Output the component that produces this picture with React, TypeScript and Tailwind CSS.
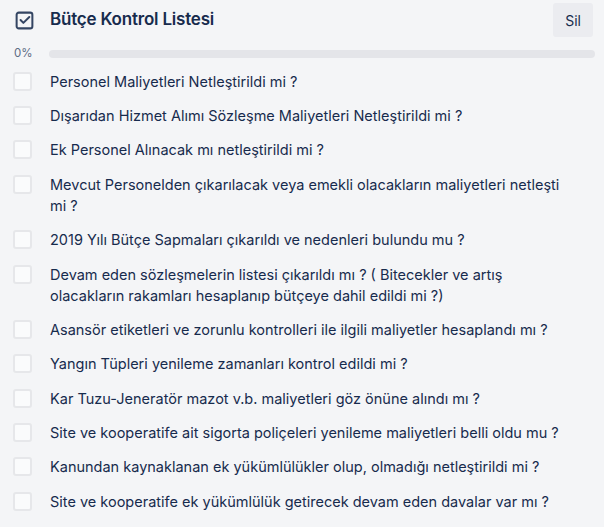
import { useState } from 'react';

const items = [
  'Personel Maliyetleri Netleştirildi mi ?',
  'Dışarıdan Hizmet Alımı Sözleşme Maliyetleri Netleştirildi mi ?',
  'Ek Personel Alınacak mı netleştirildi mi ?',
  'Mevcut Personelden çıkarılacak veya emekli olacakların maliyetleri netleşti mi ?',
  '2019 Yılı Bütçe Sapmaları çıkarıldı ve nedenleri bulundu mu ?',
  'Devam eden sözleşmelerin listesi çıkarıldı mı ? ( Bitecekler ve artış olacakların rakamları hesaplanıp bütçeye dahil edildi mi ?)',
  'Asansör etiketleri ve zorunlu kontrolleri ile ilgili maliyetler hesaplandı mı ?',
  'Yangın Tüpleri yenileme zamanları kontrol edildi mi ?',
  'Kar Tuzu-Jeneratör mazot v.b. maliyetleri göz önüne alındı mı ?',
  'Site ve kooperatife ait sigorta poliçeleri yenileme maliyetleri belli oldu mu ?',
  'Kanundan kaynaklanan ek yükümlülükler olup, olmadığı netleştirildi mi ?',
  'Site ve kooperatife ek yükümlülük getirecek devam eden davalar var mı ?',
];

function ChecklistIcon() {
  return (
    <svg width="21" height="21" viewBox="0 0 24 24" fill="none" stroke="#344563" strokeWidth={2.3} strokeLinecap="round" strokeLinejoin="round">
      <rect x="3" y="3" width="18" height="18" rx="2.5" />
      <path d="M7.5 11.5l3.2 3.2L17.5 8" />
    </svg>
  );
}

export default function App() {
  const [checked, setChecked] = useState<boolean[]>(items.map(() => false));
  const done = checked.filter(Boolean).length;
  const percent = Math.round((done / items.length) * 100);

  return (
    <div className="w-full h-[527px] bg-[#f4f5f7] text-[#172b4d] font-['Inter','Noto_Sans',sans-serif] overflow-hidden">
      <div className="flex items-center h-[40px] pl-[14px] pr-[11px]">
        <div className="w-[36px] flex items-center">
          <ChecklistIcon />
        </div>
        <h2 className="flex-1 text-[17px] font-semibold tracking-[-0.2px]">Bütçe Kontrol Listesi</h2>
        <button className="h-[34px] px-[12px] rounded-[3px] bg-[#ebecf0] text-[14px] text-[#172b4d]">Sil</button>
      </div>

      <div className="flex items-center h-[20px] mt-[4px] pl-[14px] pr-[9px]">
        <span className="w-[35px] text-[11.5px] text-[#5e6c84]">{percent}%</span>
        <div className="flex-1 h-[8px] rounded-full bg-[#e4e5e9] overflow-hidden">
          <div className="h-full bg-[#36b37e]" style={{ width: `${percent}%` }} />
        </div>
      </div>

      <ul className="pr-[28px]">
        {items.map((text, i) => (
          <li key={i} className="flex items-start py-[6.7px]">
            <div className="w-[50px] shrink-0 pl-[13px] pt-[1px]">
              <button
                onClick={() => setChecked(c => c.map((v, j) => (j === i ? !v : v)))}
                className="block w-[19px] h-[19px] rounded-[3px] border-2 border-[#e6e7ea] bg-[#fafbfc]"
              />
            </div>
            <span className="text-[14.5px] leading-[21px]">{text}</span>
          </li>
        ))}
      </ul>
    </div>
  );
}
